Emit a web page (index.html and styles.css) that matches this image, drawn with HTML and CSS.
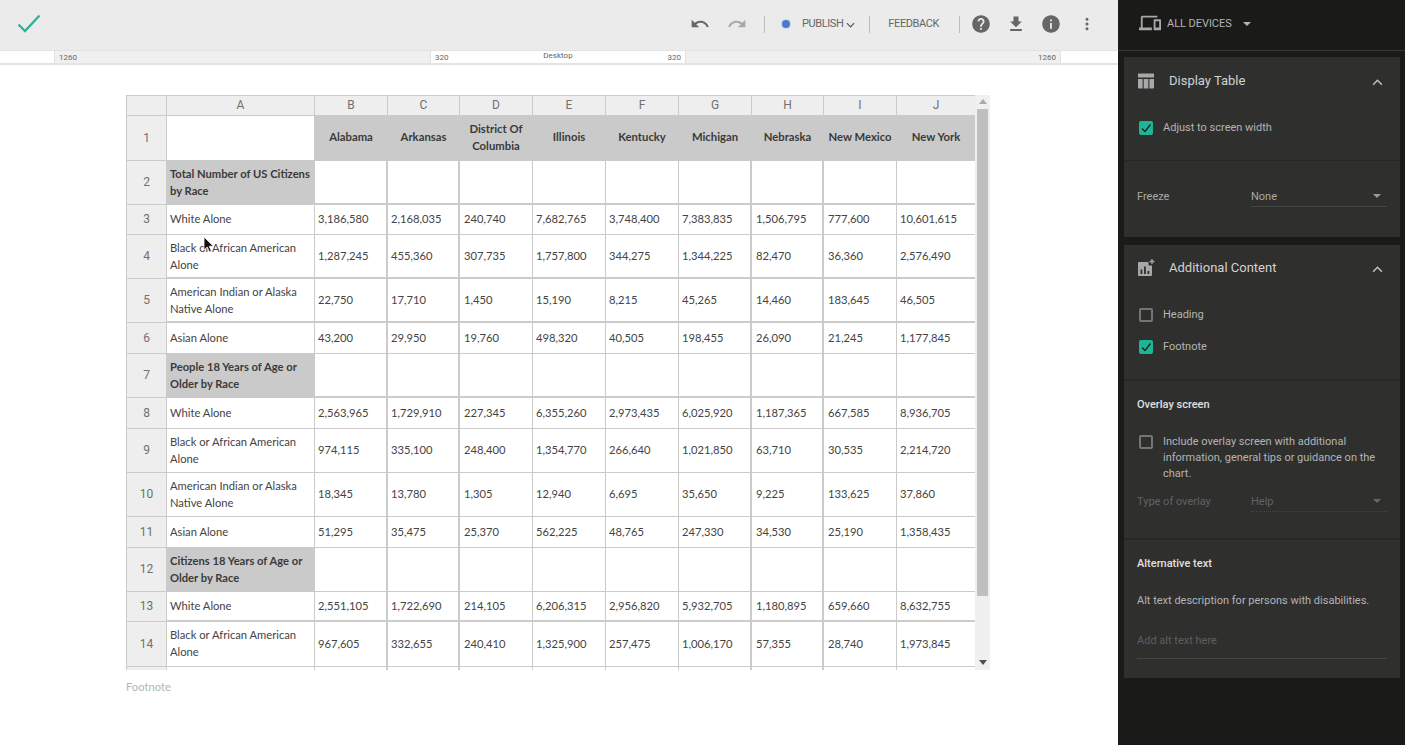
FILE: index.html
```html
<!DOCTYPE html>
<html lang="en">
<head>
<meta charset="utf-8">
<title>Display Table</title>
<link rel="stylesheet" href="styles.css">
</head>
<body>
<div class="app">
  <main class="editor">
    <header class="toolbar">
      <svg class="done" viewBox="0 0 24 24" width="24" height="24"><path d="M1.500 12.500 8 19 22.500 3.500" fill="none" stroke="#2bb39b" stroke-width="2.300"/></svg>
      <div class="actions">
        <svg class="tool undo" viewBox="0 0 24 24" width="20" height="20"><path fill="#666" d="M12.500 8c-2.650 0-5.050.99-6.900 2.600L2 7v9h9l-3.620-3.620c1.390-1.160 3.160-1.880 5.120-1.880 3.540 0 6.550 2.310 7.600 5.500l2.370-.78C21.080 11.030 17.150 8 12.500 8z"/></svg>
        <svg class="tool redo" viewBox="0 0 24 24" width="20" height="20"><path fill="#a8a8a8" d="M18.400 10.600C16.550 8.990 14.150 8 11.500 8c-4.650 0-8.580 3.030-9.960 7.220L3.900 16c1.050-3.190 4.050-5.500 7.600-5.500 1.950 0 3.730.72 5.120 1.880L13 16h9V7l-3.600 3.600z"/></svg>
        <span class="sep sep-a"></span>
        <span class="dot"></span>
        <span class="publish">PUBLISH</span>
        <svg class="chev" viewBox="0 0 10 6" width="9" height="6"><path d="M1 1l4 4 4-4" fill="none" stroke="#555" stroke-width="1.300"/></svg>
        <span class="sep sep-b"></span>
        <span class="feedback">FEEDBACK</span>
        <span class="sep sep-c"></span>
        <svg class="tool help" viewBox="0 0 24 24" width="20" height="20"><path fill="#666" d="M12 1.500C6.200 1.500 1.500 6.200 1.500 12S6.200 22.500 12 22.500 22.500 17.800 22.500 12 17.800 1.500 12 1.500zm1 17.500h-2.200v-2.200H13V19zm2.300-7.700-.9.900c-.9.900-1.300 1.500-1.300 3h-2.200v-.5c0-1.100.4-2.100 1.300-3l1.200-1.300c.4-.3.600-.8.600-1.400 0-1.100-.9-2-2-2s-2 .9-2 2H7.800c0-2.300 1.900-4.100 4.200-4.100s4.200 1.900 4.200 4.100c0 .9-.4 1.700-.9 2.300z"/></svg>
        <svg class="tool download" viewBox="0 0 24 24" width="20" height="20"><path fill="#666" d="M19 9h-4V3H9v6H5l7 7 7-7zM5 18v2.500h14V18H5z"/></svg>
        <svg class="tool info" viewBox="0 0 24 24" width="20" height="20"><path fill="#666" d="M12 1.500C6.200 1.500 1.500 6.200 1.500 12S6.200 22.500 12 22.500 22.500 17.800 22.500 12 17.800 1.500 12 1.500zm1.100 16.200h-2.200v-7h2.200v7zm0-9h-2.200V6.500h2.200v2.200z"/></svg>
        <svg class="tool more" viewBox="0 0 24 24" width="20" height="20"><path fill="#666" d="M12 8a1.800 1.800 0 1 0 0-3.600A1.800 1.800 0 0 0 12 8zm0 2.200a1.800 1.800 0 1 0 0 3.600 1.800 1.800 0 0 0 0-3.600zm0 5.800a1.800 1.800 0 1 0 0 3.600 1.800 1.800 0 0 0 0-3.600z"/></svg>
      </div>
    </header>
    <div class="ruler">
      <div class="seg seg-blank-l"></div>
      <div class="seg seg-grey seg-left"><span>1260</span></div>
      <div class="seg seg-mid"><span>320</span><span class="desk">Desktop</span><span>320</span></div>
      <div class="seg seg-grey seg-right"><span>1260</span></div>
      <div class="seg seg-blank-r"></div>
    </div>
    <section class="canvas">
      <div class="sheet">
        <div class="grid-scroll">
          <table class="grid">
            <colgroup><col class="c0"><col class="ca"><col class="cb"><col class="cc"><col class="cd"><col class="ce"><col class="cf"><col class="cg"><col class="ch"><col class="ci"><col class="cj"></colgroup>
            <thead>
              <tr class="r-head"><th></th><th>A</th><th>B</th><th>C</th><th>D</th><th>E</th><th>F</th><th>G</th><th>H</th><th>I</th><th>J</th></tr>
            </thead>
            <tbody>
              <tr class="r-45"><th>1</th><td></td><td class="hd">Alabama</td><td class="hd">Arkansas</td><td class="hd">District Of Columbia</td><td class="hd">Illinois</td><td class="hd">Kentucky</td><td class="hd">Michigan</td><td class="hd">Nebraska</td><td class="hd">New Mexico</td><td class="hd">New York</td></tr>
              <tr class="r-44 thick"><th>2</th><td class="sec">Total Number of US Citizens by Race</td><td></td><td></td><td></td><td></td><td></td><td></td><td></td><td></td><td></td></tr>
              <tr class="r-30"><th>3</th><td>White Alone</td><td>3,186,580</td><td>2,168,035</td><td>240,740</td><td>7,682,765</td><td>3,748,400</td><td>7,383,835</td><td>1,506,795</td><td>777,600</td><td>10,601,615</td></tr>
              <tr class="r-44 thick"><th>4</th><td>Black or African American Alone</td><td>1,287,245</td><td>455,360</td><td>307,735</td><td>1,757,800</td><td>344,275</td><td>1,344,225</td><td>82,470</td><td>36,360</td><td>2,576,490</td></tr>
              <tr class="r-44 thick"><th>5</th><td>American Indian or Alaska Native Alone</td><td>22,750</td><td>17,710</td><td>1,450</td><td>15,190</td><td>8,215</td><td>45,265</td><td>14,460</td><td>183,645</td><td>46,505</td></tr>
              <tr class="r-31"><th>6</th><td>Asian Alone</td><td>43,200</td><td>29,950</td><td>19,760</td><td>498,320</td><td>40,505</td><td>198,455</td><td>26,090</td><td>21,245</td><td>1,177,845</td></tr>
              <tr class="r-44 thick"><th>7</th><td class="sec">People 18 Years of Age or Older by Race</td><td></td><td></td><td></td><td></td><td></td><td></td><td></td><td></td><td></td></tr>
              <tr class="r-31"><th>8</th><td>White Alone</td><td>2,563,965</td><td>1,729,910</td><td>227,345</td><td>6,355,260</td><td>2,973,435</td><td>6,025,920</td><td>1,187,365</td><td>667,585</td><td>8,936,705</td></tr>
              <tr class="r-44"><th>9</th><td>Black or African American Alone</td><td>974,115</td><td>335,100</td><td>248,400</td><td>1,354,770</td><td>266,640</td><td>1,021,850</td><td>63,710</td><td>30,535</td><td>2,214,720</td></tr>
              <tr class="r-44"><th>10</th><td>American Indian or Alaska Native Alone</td><td>18,345</td><td>13,780</td><td>1,305</td><td>12,940</td><td>6,695</td><td>35,650</td><td>9,225</td><td>133,625</td><td>37,860</td></tr>
              <tr class="r-31"><th>11</th><td>Asian Alone</td><td>51,295</td><td>35,475</td><td>25,370</td><td>562,225</td><td>48,765</td><td>247,330</td><td>34,530</td><td>25,190</td><td>1,358,435</td></tr>
              <tr class="r-44"><th>12</th><td class="sec">Citizens 18 Years of Age or Older by Race</td><td></td><td></td><td></td><td></td><td></td><td></td><td></td><td></td><td></td></tr>
              <tr class="r-30 thick"><th>13</th><td>White Alone</td><td>2,551,105</td><td>1,722,690</td><td>214,105</td><td>6,206,315</td><td>2,956,820</td><td>5,932,705</td><td>1,180,895</td><td>659,660</td><td>8,632,755</td></tr>
              <tr class="r-45"><th>14</th><td>Black or African American Alone</td><td>967,605</td><td>332,655</td><td>240,410</td><td>1,325,900</td><td>257,475</td><td>1,006,170</td><td>57,355</td><td>28,740</td><td>1,973,845</td></tr>
              <tr class="r-44"><th></th><td></td><td></td><td></td><td></td><td></td><td></td><td></td><td></td><td></td><td></td></tr>
            </tbody>
          </table>
        </div>
        <div class="scrollbar">
          <span class="arrow up"></span>
          <span class="thumb"></span>
          <span class="arrow down"></span>
        </div>
      </div>
      <p class="footnote">Footnote</p>
      <svg class="cursor" viewBox="0 0 12 18" width="12" height="18"><path d="M1 1v13l3.200-3 2.200 5 2-.9-2.200-4.800H10.500z" fill="#111" stroke="#fff" stroke-width=".8"/></svg>
    </section>
  </main>
  <aside class="side">
    <div class="side-top">
      <svg viewBox="0 0 24 24" width="22" height="22"><path fill="#a8a8a8" d="M4 6h16V4H4c-1.100 0-2 .9-2 2v11H0v3h14v-3H4V6zm19 2h-6c-.55 0-1 .45-1 1v10c0 .55.45 1 1 1h6c.55 0 1-.45 1-1V9c0-.55-.45-1-1-1zm-1 9h-4v-7h4v7z"/></svg>
      <span class="devices">ALL DEVICES</span>
      <span class="tri tri-top"></span>
    </div>
    <div class="panel panel-table">
      <div class="panel-head">
        <svg class="ph-icon" viewBox="0 0 18 18" width="18" height="18"><path fill="#a8a8a8" d="M1 1.500h16v4H1zM1 7h4.600v9.500H2a1 1 0 0 1-1-1zM6.700 7h4.600v9.500H6.700zM12.400 7H17v8.500a1 1 0 0 1-1 1h-3.600z"/></svg>
        <span class="ph-title">Display Table</span>
        <svg class="ph-chev" viewBox="0 0 12 8" width="11" height="7"><path d="M1 6.500l5-5 5 5" fill="none" stroke="#c4c4c4" stroke-width="1.700"/></svg>
      </div>
      <div class="adjust">
        <label class="check"><span class="box on"><svg viewBox="0 0 14 14" width="14" height="14"><path d="M3 7.500l3 3 5.500-7" fill="none" stroke="#1c1c1c" stroke-width="1.300"/></svg></span><span>Adjust to screen width</span></label>
      </div>
      <div class="field field-freeze"><span class="f-label">Freeze</span><span class="select"><span>None</span><span class="tri"></span></span></div>
    </div>
    <div class="panel panel-extra">
      <div class="panel-head head-extra">
        <svg class="ph-icon" viewBox="0 0 18 18" width="18" height="18"><path fill="#a8a8a8" fill-rule="evenodd" d="M2 3h9.500v3.500H15V16a1 1 0 0 1-1 1H2a1 1 0 0 1-1-1V4a1 1 0 0 1 1-1zM3.500 10.500V15h1.800v-4.500zM7 7.500V15h1.800V7.500zM10.500 12v3h1.800v-3z"/><path d="M15 0v5M12.500 2.500h5" stroke="#a8a8a8" stroke-width="1.300"/></svg>
        <span class="ph-title">Additional Content</span>
        <svg class="ph-chev" viewBox="0 0 12 8" width="11" height="7"><path d="M1 6.500l5-5 5 5" fill="none" stroke="#c4c4c4" stroke-width="1.700"/></svg>
      </div>
      <div class="sub-content">
        <label class="check"><span class="box"></span><span>Heading</span></label>
        <label class="check"><span class="box on"><svg viewBox="0 0 14 14" width="14" height="14"><path d="M3 7.500l3 3 5.500-7" fill="none" stroke="#1c1c1c" stroke-width="1.300"/></svg></span><span>Footnote</span></label>
      </div>
      <div class="sub-overlay">
        <h3>Overlay screen</h3>
        <label class="check check-long"><span class="box"></span><span>Include overlay screen with additional information, general tips or guidance on the chart.</span></label>
        <div class="field field-off"><span class="f-label">Type of overlay</span><span class="select"><span>Help</span><span class="tri"></span></span></div>
      </div>
      <div class="sub-alt">
        <h3>Alternative text</h3>
        <p class="alt-desc">Alt text description for persons with disabilities.</p>
        <div class="alt-input">Add alt text here</div>
      </div>
    </div>
  </aside>
</div>
</body>
</html>
```

FILE: styles.css
```css
* { box-sizing: border-box; }
html, body { margin: 0; height: 100%; }
body { font-family: Roboto, "Liberation Sans", sans-serif; background: #fff; overflow: hidden; }
.app { display: flex; width: 1405px; height: 745px; }

.editor { width: 1118px; flex: none; display: flex; flex-direction: column; }
.toolbar { height: 51px; flex: none; background: #ebebeb; border-bottom: 1px solid #e2e2e2; display: flex; align-items: center; padding: 0 21px 2px 17px; }
.actions { margin-left: auto; display: flex; align-items: center; height: 100%; color: #666; font-size: 11px; letter-spacing: -.4px; }
.tool { flex: none; }
.undo { margin-right: 17px; }
.redo { margin-right: 17px; }
.sep { width: 1px; height: 17px; background: #bdbdbd; flex: none; }
.dot { width: 8px; height: 8px; border-radius: 50%; background: #4f78c8; box-shadow: 0 0 0 1.500px #d5dff2; margin: 0 12px 0 17px; }
.publish { margin-bottom: 2px; }
.chev { margin: 1px 14px 0 3px; }
.feedback { margin: 0 20px 2px 18px; }
.help { margin-left: 11px; }
.download { margin-left: 15px; }
.info { margin-left: 15px; }
.more { margin-left: 16px; }

.ruler { height: 14px; flex: none; display: flex; border-bottom: 2px solid #e4e4e4; font: 8px/13px Roboto, "Liberation Sans", sans-serif; color: #666; }
.seg { height: 12px; }
.seg-blank-l { width: 54px; }
.seg-blank-r { width: 57px; }
.seg-grey { background: #f0f0f0; border-left: 1px solid #e2e2e2; border-right: 1px solid #e2e2e2; }
.seg-left { width: 377px; padding-left: 4px; }
.seg-right { width: 376px; text-align: right; padding-right: 4px; }
.seg-mid { width: 254px; display: flex; justify-content: space-between; padding: 0 4px; }
.seg-mid .desk { line-height: 10px; }

.canvas { flex: 1; position: relative; padding: 30px 0 0 126px; }
.sheet { width: 864px; height: 575px; display: flex; }
.grid-scroll { width: 849px; height: 575px; overflow: hidden; flex: none; }
.grid { width: 849px; table-layout: fixed; border-collapse: collapse; font: 11.200px/17px Lato, "Liberation Sans", sans-serif; color: #444; }
.c0 { width: 40px; } .ca { width: 148px; } .cb { width: 73px; } .cc { width: 72px; } .cd { width: 73px; } .ce { width: 73px; } .cf { width: 73px; } .cg { width: 73px; } .ch { width: 72px; } .ci { width: 73px; } .cj { width: 79px; }
.grid th, .grid td { border: 1px solid #cbcbcb; padding: 0 3px; overflow: hidden; }
.grid th { background: #eee; font: 400 12px/17px Roboto, "Liberation Sans", sans-serif; color: #707070; text-align: center; }
.grid td { background: #fff; vertical-align: middle; padding-bottom: 2px; --tr: 0; --tb: 0; box-shadow: inset calc(var(--tr) * -1px) 0 0 #cbcbcb, inset 0 calc(var(--tb) * -1px) 0 #cbcbcb; }
.grid td:nth-child(3), .grid td:nth-child(4), .grid td:nth-child(8), .grid td:nth-child(9) { --tr: 1; }
.grid td:nth-child(5), .grid td:nth-child(9), .grid td:nth-child(10) { padding-left: 4px; }
.thick td { --tb: 1; }
.r-head { height: 20px; }
.r-45 { height: 45px; }
.r-44 { height: 44px; }
.r-31 { height: 31px; }
.r-30 { height: 30px; }
.grid td.hd { background: #cacaca; border-color: #cacaca; font-weight: 700; font-size: 11.300px; text-align: center; padding: 0 2px 3px; color: #3a3a3a; }
.grid td.sec { background: #cacaca; border-color: #cacaca; font-weight: 700; padding-right: 2px; color: #3a3a3a; }

.scrollbar { width: 15px; height: 575px; background: #f0f0f0; display: flex; flex-direction: column; align-items: center; flex: none; }
.thumb { width: 11px; height: 487px; background: #bfbfbf; flex: none; margin-bottom: auto; }
.arrow { width: 0; height: 0; border-left: 4px solid transparent; border-right: 4px solid transparent; flex: none; }
.arrow.up { border-bottom: 5px solid #a9a9a9; margin: 4px 0 5px; }
.arrow.down { border-top: 5px solid #4f4f4f; margin-bottom: 5px; }
.footnote { margin: 10px 0 0; font: 11.200px/14px Lato, "Liberation Sans", sans-serif; color: #b5b5b5; }
.cursor { position: absolute; left: 203px; top: 171px; }

.side { width: 287px; flex: none; background: #1a1a18; color: #b9b9b9; }
.side-top { height: 51px; border-bottom: 1px solid #383838; display: flex; align-items: center; padding: 0 0 4px 21px; font-size: 11px; letter-spacing: -.05px; }
.devices { margin-left: 6px; color: #b4b4b4; }
.tri { width: 0; height: 0; border-left: 4px solid transparent; border-right: 4px solid transparent; border-top: 4px solid #9a9a9a; flex: none; }
.tri-top { margin-left: 11px; margin-top: 2px; border-top-color: #b4b4b4; }
.panel { margin-left: 6px; width: 276px; background: #2f2f2e; }
.panel-table { margin-top: 6px; height: 180px; }
.panel-extra { margin-top: 8px; height: 433px; display: flex; flex-direction: column; }
.panel-head { height: 47px; display: flex; align-items: center; padding: 0 17px 0 13px; flex: none; }
.head-extra { height: 45px; }
.ph-title { margin-left: 14px; font-size: 13px; color: #d2d2d2; }
.ph-chev { margin-left: auto; margin-top: 3px; }
.check { display: flex; align-items: flex-start; font-size: 11px; line-height: 16px; color: #b4b4b4; }
.box { width: 14px; height: 14px; flex: none; margin: 1px 10px 0 15px; border: 2px solid #757575; border-radius: 2px; display: block; }
.box.on { background: #1eb597; border: 0; }
.adjust { height: 57px; padding-top: 16px; border-bottom: 1px solid #272726; }
.field { display: flex; align-items: center; font-size: 11px; color: #a8a8a8; padding: 0 13px; }
.f-label { width: 114px; flex: none; }
.select { flex: 1; display: flex; justify-content: space-between; align-items: center; height: 22px; padding-top: 1px; border-bottom: 1px solid #454545; padding-right: 6px; }
.field-freeze { margin-top: 24px; }
.sub-content { padding-top: 17px; height: 91px; border-bottom: 2px solid #272726; display: flex; flex-direction: column; gap: 16px; flex: none; }
.sub-overlay { height: 159px; border-bottom: 2px solid #272726; padding-top: 16px; flex: none; }
h3 { margin: 0; padding-left: 13px; font: 500 11px/16px Roboto, "Liberation Sans", sans-serif; color: #e0e0e0; }
.check-long { margin-top: 21px; padding-right: 12px; }
.field-off { margin-top: 8px; color: #626262; }
.field-off .select { border-bottom: 1px dotted #454545; }
.field-off .tri { border-top-color: #666; }
.sub-alt { padding-top: 16px; }
.alt-desc { margin: 21px 13px 0; font-size: 11px; line-height: 16px; color: #b4b4b4; }
.alt-input { margin: 24px 13px 0; height: 26px; font-size: 11px; line-height: 16px; color: #5f5f5f; border-bottom: 1px solid #454545; }
```
